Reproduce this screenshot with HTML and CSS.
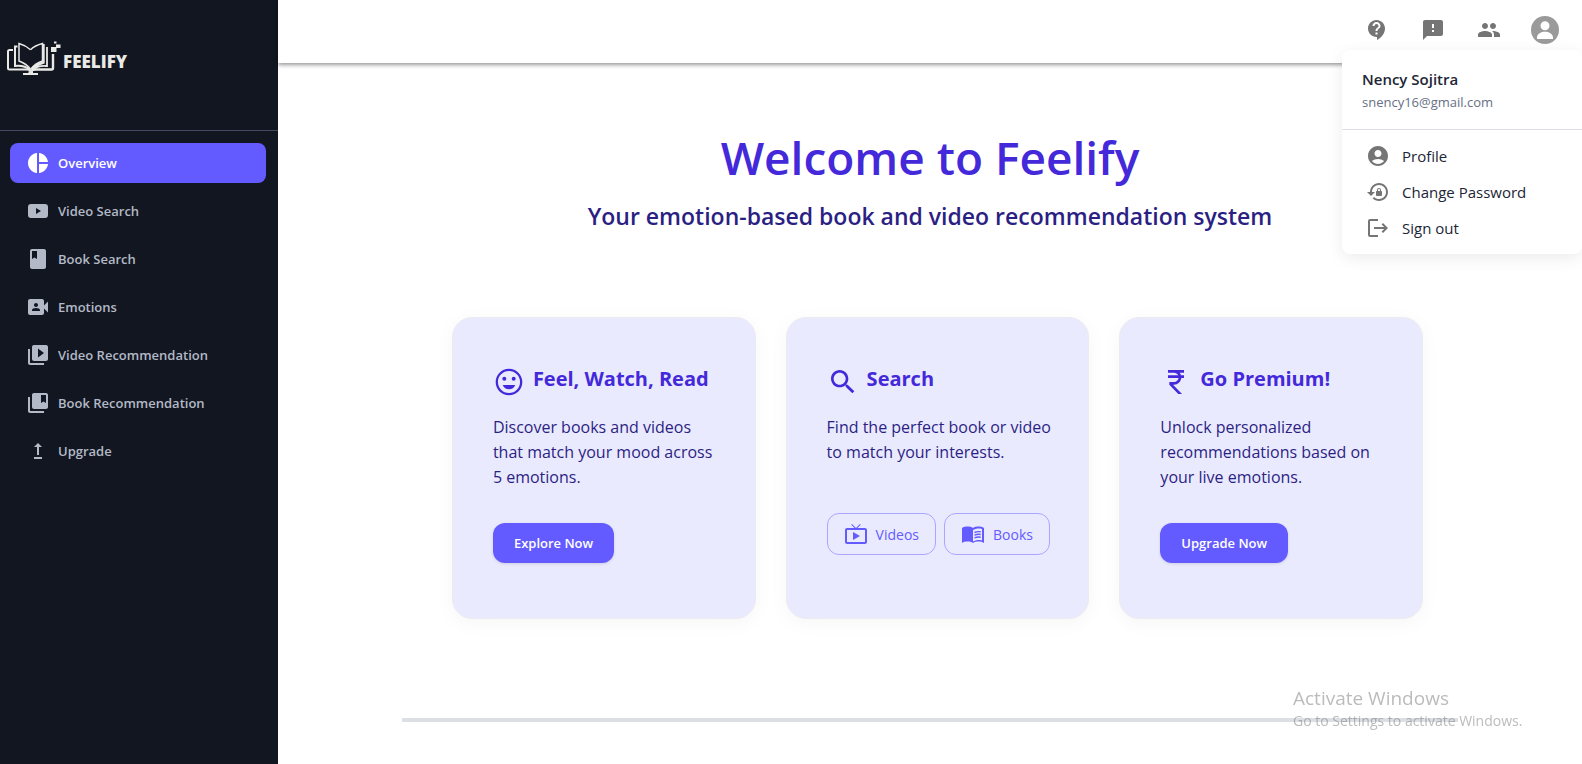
FILE: index.html
```html
<!DOCTYPE html>
<html lang="en">
<head>
<meta charset="utf-8">
<title>Feelify</title>
<link rel="stylesheet" href="styles.css">
</head>
<body>
<div class="app">
  <aside class="sidebar">
    <a class="brand" href="#" aria-label="Feelify home">
      <svg class="brand-mark" viewBox="0 0 56 36" fill="none" stroke="#e9eae6" aria-hidden="true">
        <path d="M7 10H3.500q-1.500 0-1.500 1.500V28q0 1.500 1.500 1.500H20q4 0 5 2" stroke-width="2"/>
        <path d="M11.500 6.500H9V26q9-1 15.500 4" stroke-width="2"/>
        <path d="M24.500 9.700Q20 5.500 13 3.500V21Q20 23.500 24.500 29" stroke-width="1.500"/>
        <path d="M24.500 9.700Q29 5.500 36.500 3.500V21Q29 23.500 25 29" stroke-width="1.500"/>
        <path d="M37.500 4V22.500q-7 2-12 7" stroke-width="2.400"/>
        <path d="M41 7V26q-9-1-15 4" stroke-width="1.800"/>
        <path d="M47 14V28q0 1.500-1.500 1.500H30q-4 0-5 2" stroke-width="2.400"/>
        <path d="M17 34H32M22.500 32.200H27" stroke-width="2"/>
        <path d="M45 7h5.500v5h-5.500zM50 4.500h4.500v3.500H50zM48 1.500h2.500v2H48z" fill="#e9eae6" stroke="none"/>
      </svg>
      <span class="brand-name">FEELIFY</span>
    </a>
    <nav class="nav">
      <a class="nav-link active" href="#"><svg viewBox="0 0 24 24"><path d="M11 2v20c-5.070-.5-9-4.790-9-10s3.930-9.500 9-10zm2.030 0v8.990H22c-.470-4.740-4.240-8.520-8.970-8.990zm0 11.010V22c4.740-.470 8.500-4.250 8.970-8.990h-8.970z"/></svg>Overview</a>
      <a class="nav-link" href="#"><svg viewBox="0 0 24 24"><path d="M5 5h14q3 0 3 3v8q0 3-3 3H5q-3 0-3-3V8q0-3 3-3zm5 4v6l5-3z"/></svg>Video Search</a>
      <a class="nav-link" href="#"><svg viewBox="0 0 24 24"><path d="M18 2H6c-1.100 0-2 .9-2 2v16c0 1.100.9 2 2 2h12c1.100 0 2-.9 2-2V4c0-1.100-.9-2-2-2zM6 4h5v8l-2.500-1.500L6 12V4z"/></svg>Book Search</a>
      <a class="nav-link" href="#"><svg viewBox="0 0 24 24"><path d="M18 10.480V6c0-1.100-.9-2-2-2H4c-1.100 0-2 .9-2 2v12c0 1.100.9 2 2 2h12c1.100 0 2-.9 2-2v-4.480l4 3.980v-11l-4 3.980zM10 8c1.100 0 2 .9 2 2s-.9 2-2 2-2-.9-2-2 .9-2 2-2zm4 8H6v-.570c0-.810.480-1.530 1.220-1.850C8.070 13.210 9.010 13 10 13s1.930.210 2.780.580c.740.320 1.220 1.040 1.220 1.850V16z"/></svg>Emotions</a>
      <a class="nav-link" href="#"><svg viewBox="0 0 24 24"><path d="M4 6H2v14c0 1.100.9 2 2 2h14v-2H4V6zm16-4H8c-1.100 0-2 .9-2 2v12c0 1.100.9 2 2 2h12c1.100 0 2-.9 2-2V4c0-1.100-.9-2-2-2zm-8 12.500v-9l6 4.500-6 4.500z"/></svg>Video Recommendation</a>
      <a class="nav-link" href="#"><svg viewBox="0 0 24 24"><path d="M4 6H2v14c0 1.100.9 2 2 2h14v-2H4V6zM20 2H8c-1.100 0-2 .9-2 2v12c0 1.100.9 2 2 2h12c1.100 0 2-.9 2-2V4c0-1.100-.9-2-2-2zm0 10-2.500-1.500L15 12V4h5v8z"/></svg>Book Recommendation</a>
      <a class="nav-link" href="#"><svg viewBox="0 0 24 24"><path d="M16 18v2H8v-2h8zM11 7.990V16h2V7.990h3L12 4 8 7.990h3z"/></svg>Upgrade</a>
    </nav>
  </aside>

  <div class="page">
    <header class="topbar">
      <button class="icon-button" type="button" aria-label="Help"><svg viewBox="0 0 24 24"><path d="M11.500 2C6.810 2 3 5.810 3 10.500S6.810 19 11.500 19h.5v3c4.860-2.340 8-7 8-11.500C20 5.810 16.190 2 11.500 2zm1 14.500h-2v-2h2v2zm0-3.500h-2c0-3.250 3-3 3-5 0-1.100-.9-2-2-2s-2 .9-2 2h-2c0-2.210 1.790-4 4-4s4 1.790 4 4c0 2.500-3 2.750-3 5z"/></svg></button>
      <button class="icon-button" type="button" aria-label="Feedback"><svg viewBox="0 0 24 24"><path d="M20 2H4c-1.100 0-1.990.9-1.990 2L2 22l4-4h14c1.100 0 2-.9 2-2V4c0-1.100-.9-2-2-2zm-7 12h-2v-2h2v2zm0-4h-2V6h2v4z"/></svg></button>
      <button class="icon-button" type="button" aria-label="Contacts"><svg viewBox="0 0 24 24"><path d="M16 11c1.660 0 2.990-1.340 2.990-3S17.660 5 16 5s-3 1.340-3 3 1.340 3 3 3zm-8 0c1.660 0 2.990-1.340 2.990-3S9.660 5 8 5 5 6.340 5 8s1.340 3 3 3zm0 2c-2.330 0-7 1.170-7 3.500V19h14v-2.500c0-2.330-4.670-3.500-7-3.500zm8 0c-.290 0-.620.020-.970.050 1.160.840 1.970 1.970 1.970 3.450V19h6v-2.500c0-2.330-4.670-3.500-7-3.500z"/></svg></button>
      <button class="icon-button" type="button" aria-label="Account"><svg class="avatar" viewBox="0 0 28 28"><circle cx="14" cy="14" r="14"/><path class="avatar-person" d="M14 14.300a4.500 4.500 0 1 0 0-9 4.500 4.500 0 0 0 0 9zM6 23v-1.500c0-4 4.500-5.800 8-5.800s8 1.800 8 5.800V23z"/></svg></button>
      <section class="account-menu" aria-label="Account menu">
        <div class="account-head">
          <strong class="account-name">Nency Sojitra</strong>
          <span class="account-mail">snency16@gmail.com</span>
        </div>
        <div class="account-actions">
          <button class="menu-item" type="button"><svg viewBox="0 0 24 24"><path d="M12 2C6.480 2 2 6.480 2 12s4.480 10 10 10 10-4.480 10-10S17.520 2 12 2zm0 4c1.930 0 3.500 1.570 3.500 3.500S13.930 13 12 13s-3.500-1.570-3.500-3.500S10.070 6 12 6zm0 14c-2.030 0-4.430-.820-6.140-2.880C7.550 15.800 9.680 15 12 15s4.450.8 6.140 2.120C16.430 19.180 14.030 20 12 20z"/></svg>Profile</button>
          <button class="menu-item" type="button"><svg viewBox="0 0 24 24"><path d="M13 3c-4.800 0-8.700 3.900-9 8.600V12H1l4 4 4-4H6c0-3.900 3.100-7 7-7s7 3.100 7 7-3.100 7-7 7c-1.900 0-3.600-.8-4.900-2.100l-1.400 1.400C8.300 20 10.500 21 13 21c5 0 9-4 9-9s-4-9-9-9zm2 8v-1c0-1.100-.9-2-2-2s-2 .9-2 2v1c-.6 0-1 .4-1 1v3c0 .6.4 1 1 1h4c.6 0 1-.4 1-1v-3c0-.6-.4-1-1-1zm-1 0h-2v-1c0-.6.4-1 1-1s1 .4 1 1v1z"/></svg>Change Password</button>
          <button class="menu-item" type="button"><svg viewBox="0 0 24 24"><path d="M4 3h8v2H4v14h8v2H4q-2 0-2-2V5q0-2 2-2zm13 4 5 5-5 5-1.400-1.400 2.600-2.600H8v-2h10.200l-2.600-2.600z"/></svg>Sign out</button>
        </div>
      </section>
    </header>

    <main class="content">
      <h1 class="headline">Welcome to Feelify</h1>
      <p class="tagline">Your emotion-based book and video recommendation system</p>
      <div class="cards">
        <article class="card">
          <h2 class="card-title"><svg viewBox="0 0 24 24"><path d="M11.990 2C6.470 2 2 6.480 2 12s4.470 10 9.990 10C17.520 22 22 17.520 22 12S17.520 2 11.990 2zM12 20.300c-4.600 0-8.300-3.700-8.300-8.300S7.400 3.700 12 3.700s8.300 3.700 8.300 8.300-3.700 8.300-8.300 8.300z"/><path d="M7.300 14.200h9.400C16 16.300 14.200 17.500 12 17.500s-4-1.200-4.700-3.300z"/><circle cx="8.500" cy="9.500" r="1.500"/><circle cx="15.500" cy="9.500" r="1.500"/></svg>Feel, Watch, Read</h2>
          <p class="card-text">Discover books and videos that match your mood across 5 emotions.</p>
          <div class="card-actions"><button class="button" type="button">Explore Now</button></div>
        </article>
        <article class="card">
          <h2 class="card-title"><svg viewBox="0 0 24 24"><path d="M15.500 14h-.790l-.280-.270C15.410 12.590 16 11.110 16 9.500 16 5.910 13.090 3 9.500 3S3 5.910 3 9.500 5.910 16 9.500 16c1.610 0 3.090-.590 4.230-1.570l.270.280v.790l5 4.990L20.490 19l-4.990-5zm-6 0C7.010 14 5 11.990 5 9.500S7.010 5 9.500 5 14 7.010 14 9.500 11.990 14 9.500 14z"/></svg>Search</h2>
          <p class="card-text">Find the perfect book or video to match your interests.</p>
          <div class="card-actions raised">
            <button class="button outlined" type="button"><svg viewBox="0 0 24 24"><path d="M9 10v8l7-4zm12-4h-7.580l3.290-3.290L16 2l-4 4h-.030l-4-4-.690.710L10.560 6H3c-1.100 0-2 .890-2 2v12c0 1.100.9 2 2 2h18c1.100 0 2-.9 2-2V8c0-1.110-.9-2-2-2zm0 14H3V8h18v12z"/></svg>Videos</button>
            <button class="button outlined" type="button"><svg viewBox="0 0 24 24"><path d="M17.500 4.500c-1.950 0-4.050.4-5.500 1.500-1.450-1.100-3.550-1.500-5.500-1.500S2.450 4.900 1 6v15c1.450-1.100 3.550-1.500 5.500-1.500s4.050.4 5.500 1.500c1.450-1.100 3.550-1.500 5.500-1.500 1.170 0 2.390.150 3.500.5.750.250 1.400.550 2 1V6c-1.510-1.120-3.590-1.500-5.500-1.500zm3.500 14c-1.100-.350-2.300-.5-3.500-.5-1.700 0-4.150.650-5.500 1.500V8c1.350-.850 3.800-1.500 5.500-1.500 1.200 0 2.400.150 3.500.5v11.500z"/><path d="M13.500 10.500q3-1.300 6.200-.7M13.500 13.200q3-1.300 6.200-.7M13.500 15.900q3-1.300 6.200-.7" fill="none" stroke="currentColor" stroke-width="1.400"/></svg>Books</button>
          </div>
        </article>
        <article class="card">
          <h2 class="card-title"><svg viewBox="0 0 24 24"><path d="M13.660 7c-.560-1.180-1.760-2-3.160-2H6V3h12v2h-3.260c.480.580.840 1.260 1.050 2H18v2h-2.020c-.250 2.800-2.610 5-5.480 5h-.730l6.730 7h-2.770L7 14v-2h3.500c1.760 0 3.220-1.300 3.460-3H6V7h7.660z"/></svg>Go Premium!</h2>
          <p class="card-text">Unlock personalized recommendations based on your live emotions.</p>
          <div class="card-actions"><button class="button" type="button">Upgrade Now</button></div>
        </article>
      </div>
      <hr class="rule">
    </main>
  </div>
</div>
<div class="watermark">
  <div class="watermark-title">Activate Windows</div>
  <div>Go to Settings to activate Windows.</div>
</div>
</body>
</html>
```
FILE: styles.css
```css
* { box-sizing: border-box; }
body {
  margin: 0;
  background: #fff;
  color: #212636;
  font-family: "Open Sans", "Noto Sans", sans-serif;
  font-size: 14px;
}
button { font: inherit; cursor: pointer; }
svg { fill: currentColor; flex: none; }

.app { display: flex; min-height: 100vh; }

.sidebar {
  flex: 0 0 278px;
  background: #121621;
  color: #b3b9c6;
}
.brand {
  display: flex;
  align-items: center;
  gap: 1px;
  height: 131px;
  padding: 0 6px 14px;
  border-bottom: 1px solid #434a60;
  color: #e9eae6;
  text-decoration: none;
}
.brand-mark { width: 56px; height: 36px; fill: none; }
.brand-name { font-size: 17px; font-weight: 800; padding-top: 6px; }
.nav {
  display: flex;
  flex-direction: column;
  gap: 8px;
  padding: 12px 12px 12px 10px;
}
.nav-link {
  display: flex;
  align-items: center;
  gap: 8px;
  height: 40px;
  padding: 0 16px;
  border-radius: 8px;
  color: inherit;
  font-size: 13px;
  font-weight: 600;
  text-decoration: none;
}
.nav-link svg { width: 24px; height: 24px; }
.nav-link.active { background: #635bff; color: #fff; }

.page { flex: 1; min-width: 0; }
.topbar {
  position: relative;
  display: flex;
  justify-content: flex-end;
  align-items: center;
  gap: 16px;
  height: 63px;
  padding: 0 17px 3px;
  box-shadow: 0 2px 4px rgba(0, 0, 0, .4);
}
.icon-button {
  display: flex;
  align-items: center;
  justify-content: center;
  width: 40px;
  height: 40px;
  padding: 0;
  border: 0;
  background: none;
  color: #757575;
}
.icon-button svg { width: 24px; height: 24px; }
.icon-button .avatar { width: 28px; height: 28px; color: #9a9a9a; }
.avatar-person { fill: #fff; }

.account-menu {
  position: absolute;
  top: 50px;
  right: 0;
  width: 240px;
  border-radius: 8px;
  background: #fff;
  box-shadow: 0 4px 16px rgba(0, 0, 0, .08);
}
.account-head {
  display: flex;
  flex-direction: column;
  padding: 16px 20px;
  border-bottom: 1px solid #dcdfe4;
}
.account-name { font-size: 15px; line-height: 26px; font-weight: 600; }
.account-mail { font-size: 13px; line-height: 21px; color: #667085; }
.account-actions { padding: 8px; }
.menu-item {
  display: flex;
  align-items: center;
  gap: 12px;
  width: 100%;
  height: 36px;
  padding: 0 16px;
  border: 0;
  background: none;
  color: #212636;
  font-size: 15px;
}
.menu-item svg { width: 24px; height: 24px; color: #757575; }

.content {
  width: 81%;
  margin: 0 auto;
  padding-top: 58px;
}
.headline, .tagline { margin: 0; text-align: center; font-weight: 600; }
.headline { color: #4329d9; font-size: 46px; line-height: 72px; }
.tagline { color: #2c1f83; font-size: 23px; line-height: 46px; }
.cards {
  display: grid;
  grid-template-columns: repeat(3, minmax(0, 1fr));
  gap: 30px;
  margin: 78px 35px 0 50px;
}
.card {
  padding: 48px 36px 55px 40px;
  border: 1px solid #ececf0;
  border-radius: 20px;
  background: #eaeaff;
  box-shadow: 0 4px 20px rgba(0, 0, 0, .04);
}
.card-title {
  display: flex;
  gap: 8px;
  margin: 0 0 17px;
  color: #4329d9;
  font-size: 20px;
  line-height: 26px;
  font-weight: 700;
  white-space: nowrap;
}
.card-title svg { width: 32px; height: 32px; }
.card-text {
  min-height: 75px;
  margin: 0;
  color: #2c1f83;
  font-size: 16px;
  line-height: 25px;
}
.card-actions { display: flex; gap: 8px; margin-top: 33px; }
.card-actions.raised { margin-top: 23px; }
.button {
  display: flex;
  align-items: center;
  gap: 8px;
  height: 40px;
  padding: 0 21px;
  border: 0;
  border-radius: 12px;
  background: #635bff;
  color: #fff;
  font-size: 13px;
  font-weight: 600;
  box-shadow: 0 1px 3px rgba(0, 0, 0, .12);
}
.button.outlined {
  height: 42px;
  padding: 0 16px;
  border: 1px solid #aaa5ff;
  background: none;
  color: #635bff;
  font-size: 14px;
  font-weight: 400;
  box-shadow: none;
}
.button svg { width: 24px; height: 24px; }
.rule {
  height: 4px;
  margin: 99px 0 42px;
  border: 0;
  background: #dcdfe4;
}

.watermark {
  position: fixed;
  right: 53px;
  bottom: 33px;
  width: 236px;
  color: rgba(120, 120, 120, .5);
  font-size: 14px;
  line-height: 20px;
  pointer-events: none;
}
.watermark-title { font-size: 19px; line-height: 26px; }
```
